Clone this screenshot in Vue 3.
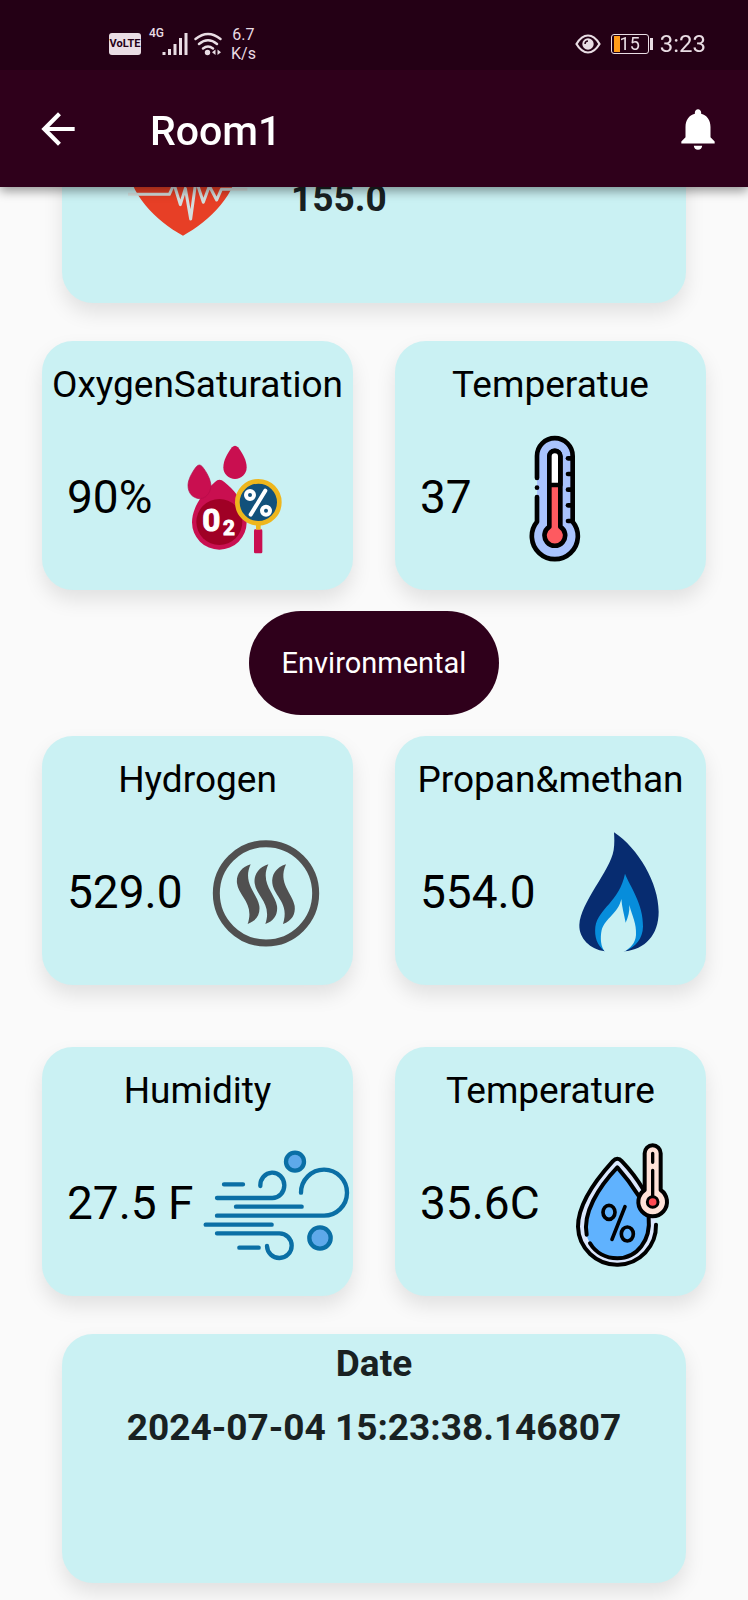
<script setup>
const vitals = [
  { label: 'OxygenSaturation', value: '90%', icon: 'oxygen' },
  { label: 'Temperatue', value: '37', icon: 'thermometer' },
]

const environment = [
  { label: 'Hydrogen', value: '529.0', icon: 'steam' },
  { label: 'Propan&methan', value: '554.0', icon: 'flame' },
  { label: 'Humidity', value: '27.5 F', icon: 'wind' },
  { label: 'Temperature', value: '35.6C', icon: 'drop' },
]

const sections = [
  { name: 'vitals', cards: vitals },
  { name: 'environment', cards: environment },
]

const viewBoxes = {
  oxygen: '426 318 375 375',
  thermometer: '336 318 375 375',
  steam: '519 693 375 375',
  flame: '528 333 375 375',
  wind: '552 336 375 375',
  drop: '543 336 375 375',
}

const ticks = [385, 432, 479, 526, 573]
const strands = [0, 53, 106]
</script>

<template>
  <div class="screen">
    <header class="top">
      <div class="status">
        <div class="status-group">
          <span class="volte">VoLTE</span>
          <span class="network">4G</span>
          <svg class="signal" viewBox="0 0 26 24" width="26" height="24" aria-hidden="true">
            <path d="M2 20V23M7.500 17V23M13 12V23M18.500 6V23M24 1V23" />
          </svg>
          <svg class="wifi" viewBox="0 0 28 24" width="28" height="24" aria-hidden="true">
            <path d="M1.500 7Q14 -3 26.500 7M5 12Q14 4.500 23 12M9 16.500Q14 12.500 19 16.500" fill="none" stroke="#e9dde4" stroke-width="2.400" stroke-linecap="round" />
            <circle cx="13.500" cy="20.500" r="2.700" />
            <path d="M21.500 17.500V23L18 20.200ZM23.500 17.500V23L27 20.200Z" />
          </svg>
          <span class="speed"><span>6.7</span><span>K/s</span></span>
        </div>
        <div class="status-group">
          <svg class="eye" viewBox="0 0 26 20" width="26" height="20" aria-hidden="true">
            <path d="M1.500 10Q6.500 1.500 13 1.500T24.500 10Q19.500 18.500 13 18.500T1.500 10Z" fill="none" stroke="#e9dde4" stroke-width="2.200" />
            <circle cx="13" cy="10" r="5.700" fill="#e9dde4" />
            <path d="M10 10Q10.200 7 13 7" fill="none" stroke="#240015" stroke-width="1.500" />
          </svg>
          <span class="battery"><span class="charge"></span>15</span>
          <time class="clock">3:23</time>
        </div>
      </div>
      <div class="bar">
        <button class="icon-button" type="button" aria-label="Back">
          <svg viewBox="0 0 24 24" width="50" height="50" fill="#fff" aria-hidden="true">
            <path d="M20 11H7.830l5.590-5.590L12 4l-8 8 8 8 1.410-1.410L7.830 13H20v-2z" />
          </svg>
        </button>
        <h1>Room1</h1>
        <button class="icon-button" type="button" aria-label="Notifications">
          <svg viewBox="0 0 24 24" width="50" height="50" fill="#fff" aria-hidden="true">
            <path d="M12 22c1.100 0 2-.9 2-2h-4c0 1.100.89 2 2 2zm6-6v-5c0-3.070-1.640-5.640-4.500-6.320V4c0-.83-.67-1.500-1.500-1.500s-1.500.67-1.500 1.500v.68C7.630 5.360 6 7.920 6 11v5l-2 2v1h16v-1l-2-2z" />
          </svg>
        </button>
      </div>
    </header>

    <main class="content">
      <section class="card wide heart">
        <svg class="icon" viewBox="360 93 375 375" width="125" height="125" aria-hidden="true">
          <path fill="#e73f26" d="M549 467C470 425 382 340 382 240C382 130 500 105 549 185C598 105 716 130 716 240C716 340 628 425 549 467Z" />
          <path fill="none" stroke="#d3dfde" stroke-width="9" stroke-linejoin="round" d="M384 343H508L522 312L541 374L556 325L572 417L588 300L610 367L628 318L650 360L664 328H742" />
        </svg>
        <strong class="strong-text">155.0</strong>
      </section>

      <template v-for="section in sections" :key="section.name">
        <button v-if="section.name === 'environment'" class="pill" type="button">Environmental</button>
        <section class="grid">
          <article v-for="card in section.cards" :key="card.label" class="card reading">
            <h2>{{ card.label }}</h2>
            <div class="row">
              <span class="value">{{ card.value }}</span>
              <svg class="icon" :viewBox="viewBoxes[card.icon]" width="125" height="125" aria-hidden="true">
                <g v-if="card.icon === 'oxygen'">
                  <g fill="#c90f50">
                    <path d="M555 456Q568 443 583 456C622 487 650 530 650 577A82 82 0 0 1 486 577C486 540 510 495 555 456Z" />
                    <path stroke="#b50c48" stroke-width="2" d="M499 410Q508 400 517 410C531 428 543 450 543 470C540 492 525 506 508 506C488 504 474 490 474 466C474 450 485 428 499 410Z" />
                    <path d="M606 352Q615 342 624 352C638 370 650 392 650 412A35 35 0 0 1 580 412C580 392 592 370 606 352Z" />
                    <rect x="672" y="598" width="25" height="72" rx="4" />
                  </g>
                  <circle cx="568" cy="576" r="69" fill="#a00025" />
                  <text x="517" y="604" font-size="95" class="icon-text">0</text>
                  <text x="579" y="615" font-size="62" class="icon-text">2</text>
                  <path d="M685 580V599" stroke="#eeb61d" stroke-width="14" />
                  <circle cx="685" cy="517" r="63" fill="#12517b" stroke="#eeb61d" stroke-width="14" />
                  <g fill="none" stroke="#fff" stroke-width="12" stroke-linecap="round">
                    <circle cx="660" cy="495" r="12" />
                    <circle cx="708" cy="542" r="12" />
                    <path d="M706 482L662 554" />
                  </g>
                </g>

                <g v-else-if="card.icon === 'thermometer'" stroke="#000" stroke-width="14" stroke-linecap="round" stroke-linejoin="round">
                  <path fill="#a9c3fd" stroke="none" d="M471 575V378A53 53 0 0 1 578 378V575A69 69 0 1 1 471 575Z" />
                  <path fill="none" d="M471 444V378A53 53 0 0 1 578 378V575A69 69 0 1 1 471 575V501" />
                  <circle cx="471" cy="473" r="7" stroke="none" />
                  <path fill="#fe5a60" d="M508 590V379A16 16 0 0 1 541 379V590A31 31 0 1 1 508 590Z" />
                  <path fill="#fff" d="M508 465V379A16 16 0 0 1 541 379V465Z" />
                  <path v-for="y in ticks" :key="y" :d="`M564 ${y}H578`" />
                </g>

                <g v-else-if="card.icon === 'steam'">
                  <circle cx="708" cy="880" r="149" fill="none" stroke="#505050" stroke-width="21" />
                  <path v-for="x in strands" :key="x" :transform="`translate(${x} 0)`" fill="#505050" d="M662 793C632 802 618 825 621 850C626 890 674 910 653 972C680 963 691 942 688 918C682 880 636 850 662 793Z" />
                </g>

                <g v-else-if="card.icon === 'flame'">
                  <path fill="#072c70" d="M702 337C775 385 836 490 836 575C836 645 795 688 733 694H675C630 688 597 655 598 615C602 545 690 455 701 390C704 370 703 355 702 337Z" />
                  <path fill="#078ddb" d="M735 461C750 500 790 550 789 620C788 655 768 680 733 694H675C650 675 643 650 646 620C655 565 718 545 735 461Z" />
                  <path fill="#caf1f3" d="M724 537C726 562 732 582 737 608C745 590 749 575 748 555C757 590 770 610 768 645C766 670 752 684 731 696H675C662 680 660 655 665 630C675 595 715 580 724 537Z" />
                </g>

                <g v-else-if="card.icon === 'wind'" fill="none" stroke="#0a6fa5" stroke-width="13" stroke-linecap="round">
                  <path d="M582 463H639M618 530H815M527 584H725M628 653H686" />
                  <path d="M561 504H727A36 38 0 1 0 691 468M561 557H881A69 69 0 1 0 813 488M561 610H748A37 37 0 1 1 711 648" />
                  <circle cx="795" cy="395" r="27" fill="#5ea9ea" />
                  <circle cx="870" cy="624" r="32" fill="#5ea9ea" />
                </g>

                <g v-else stroke="#000" stroke-width="12" stroke-linecap="round" stroke-linejoin="round">
                  <path fill="#dbe7fd" stroke="none" d="M701 394Q715 378 729 394C780 450 832 530 832 590A117 117 0 0 1 597 590C597 520 650 450 701 394Z" />
                  <path fill="#60b2fe" stroke="none" d="M715 412C760 465 810 540 810 590A95 95 0 0 1 619 590C619 540 665 465 715 412Z" />
                  <path fill="none" d="M831 584A117 117 0 1 1 597 590C597 520 650 450 701 394Q715 378 729 394C752 418 775 448 792 477" />
                  <path fill="none" d="M623 614C610 550 658 472 715 412C738 438 760 467 778 496M809 562C816 630 775 685 715 685C680 685 650 668 633 640" />
                  <path fill="#ffe2d8" d="M797 480V370A24 24 0 0 1 845 370V480A43 43 0 1 1 797 480Z" />
                  <path fill="none" stroke-width="10" d="M821 370V397M821 421V498" />
                  <circle cx="821" cy="516" r="16" fill="#fe4a53" stroke-width="9" />
                  <g fill="none" stroke-width="11">
                    <ellipse cx="690" cy="547" rx="18" ry="21" />
                    <ellipse cx="745" cy="612" rx="18" ry="21" />
                    <path d="M738 530L699 628" />
                  </g>
                </g>
              </svg>
            </div>
          </article>
        </section>
      </template>

      <section class="card wide date">
        <h2 class="strong-text">Date</h2>
        <time class="strong-text">2024-07-04 15:23:38.146807</time>
      </section>
    </main>
  </div>
</template>

<style>
body {
  margin: 0;
  background: #fafafa;
}
</style>

<style scoped>
.screen {
  font-family: Roboto, "Noto Sans", sans-serif;
  color: #000;
}

.top {
  position: fixed;
  top: 0;
  left: 0;
  right: 0;
  z-index: 2;
  background: #2f001b;
  color: #fff;
  box-shadow: 0 4px 10px rgba(0, 0, 0, 0.4);
}

.status {
  display: flex;
  justify-content: space-between;
  align-items: center;
  height: 70px;
  padding: 17px 42px 0 109px;
  box-sizing: border-box;
  background: #240015;
  color: #e9dde4;
}

.status-group {
  display: flex;
  align-items: center;
}

.volte {
  width: 32px;
  height: 22px;
  border-radius: 3px;
  background: #e9dde4;
  color: #240015;
  font-size: 11px;
  font-weight: 700;
  line-height: 22px;
  text-align: center;
}

.network {
  align-self: flex-start;
  margin-left: 8px;
  font-size: 12px;
  line-height: 16px;
  font-weight: 500;
}

.signal {
  margin-left: -2px;
  stroke: #e9dde4;
  stroke-width: 3;
}

.wifi {
  margin-left: 6px;
  fill: #e9dde4;
}

.speed {
  display: flex;
  flex-direction: column;
  align-items: center;
  margin-left: 9px;
  font-size: 16px;
  line-height: 19px;
}

.battery {
  position: relative;
  width: 38px;
  height: 20px;
  margin: 0 11px 0 10px;
  box-sizing: border-box;
  border: 1px solid #e9dde4;
  border-radius: 3px;
  font-size: 18px;
  line-height: 18px;
  text-align: center;
}

.battery::after {
  content: "";
  position: absolute;
  top: 3px;
  right: -5px;
  width: 3px;
  height: 12px;
  background: #e9dde4;
}

.charge {
  position: absolute;
  top: 1px;
  bottom: 1px;
  left: 2px;
  width: 6px;
  background: #ff9c1a;
}

.clock {
  font-size: 24px;
  line-height: 28px;
}

.bar {
  display: flex;
  align-items: center;
  height: 117px;
  padding: 0 25px 0 33px;
}

.icon-button {
  width: 50px;
  height: 50px;
  padding: 0;
  border: 0;
  background: none;
}

.icon-button svg {
  display: block;
}

h1 {
  flex: 1;
  margin: 0 0 0 67px;
  padding-top: 4px;
  font-size: 41px;
  line-height: 48px;
  font-weight: 500;
}

.content {
  display: flex;
  flex-direction: column;
  padding: 54px 42px 17px;
}

.card {
  border-radius: 31px;
  background: #caf1f3;
  box-shadow: 0 10px 20px rgba(0, 0, 0, 0.1);
}

.wide {
  min-height: 249px;
  margin: 0 20px;
  box-sizing: border-box;
}

.heart {
  display: flex;
  align-items: flex-end;
  gap: 46px;
  padding: 0 58px 67px;
  margin-bottom: 38px;
}

.heart .strong-text {
  padding-bottom: 15px;
}

.grid {
  display: grid;
  grid-template-columns: 1fr 1fr;
  gap: 62px 42px;
}

.reading {
  min-width: 0;
  padding: 22px 0 29px;
}

h2 {
  margin: 0;
  font-size: 37px;
  line-height: 44px;
  font-weight: 400;
  text-align: center;
}

.row {
  display: flex;
  align-items: center;
  gap: 20px;
  margin-top: 29px;
  padding-left: 25px;
}

.value {
  padding-bottom: 4px;
  font-size: 46px;
  line-height: 54px;
  white-space: nowrap;
}

.icon {
  display: block;
  flex: none;
  overflow: visible;
}

.icon-text {
  fill: #fff;
  stroke: #fff;
  stroke-width: 3;
  font-weight: 700;
}

.pill {
  align-self: center;
  width: 250px;
  height: 104px;
  margin: 21px 0;
  padding: 0;
  border: 0;
  border-radius: 52px;
  background: #2f001b;
  color: #fff;
  font-family: inherit;
  font-size: 29px;
}

.strong-text {
  font-size: 37px;
  line-height: 44px;
  font-weight: 700;
  color: #192122;
}

.date {
  display: flex;
  flex-direction: column;
  align-items: center;
  gap: 20px;
  margin-top: 38px;
  padding: 8px 10px;
}
</style>
